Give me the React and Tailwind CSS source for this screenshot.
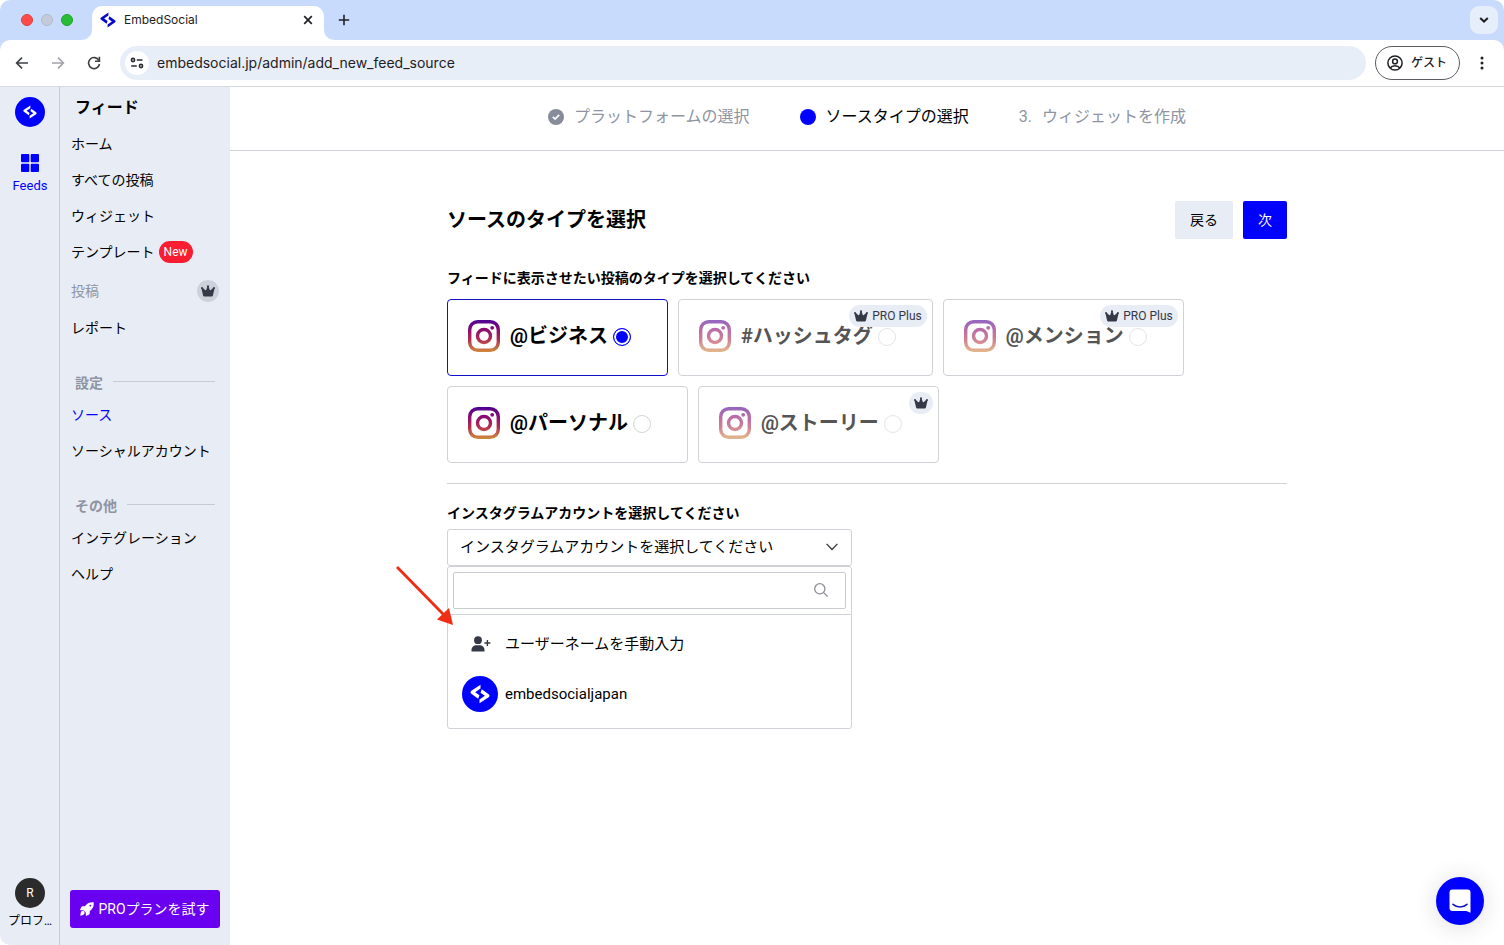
import { useState } from "react";

const SANS = "font-['Roboto','Noto_Sans_CJK_JP',sans-serif]";

function LogoMark({ className }) {
  return (
    <svg viewBox="0 0 24 24" className={className} fill="currentColor" aria-hidden="true">
      <path d="M12.600.8v4.600L6.200 9.900l5.200 3.700-1.600 4L1.600 11.600c-1.300-1-1.300-2.400 0-3.400Z" />
      <path d="M11.400 23.200v-4.600l6.400-4.500-5.200-3.700 1.600-4 8.200 6c1.300 1 1.300 2.400 0 3.400Z" />
    </svg>
  );
}

function Crown({ className }) {
  return (
    <svg viewBox="0 0 14 12" className={className} fill="currentColor" aria-hidden="true">
      <circle cx="1" cy="2.9" r=".9" />
      <circle cx="7" cy="1.2" r="1" />
      <circle cx="13" cy="2.9" r=".9" />
      <path d="M.4 3.200 1.500 2.600 4.300 5.300 5.200 5 6.400 1.400h1.200L8.800 5l.9.300 2.800-2.700 1.100.6-1.700 7.300a1.200 1.200 0 0 1-1.200.9H3.300a1.200 1.200 0 0 1-1.200-.9Z" />
    </svg>
  );
}

function InstagramIcon({ id, className }) {
  const paint = `url(#${id})`;
  return (
    <svg viewBox="0 0 32 32" className={className} fill="none" aria-hidden="true">
      <defs>
        <linearGradient id={id} gradientUnits="userSpaceOnUse" x1="16" y1="0" x2="16" y2="32">
          <stop offset="0" stopColor="#4b0096" />
          <stop offset="0.3" stopColor="#8a0c72" />
          <stop offset="0.6" stopColor="#b02a50" />
          <stop offset="1" stopColor="#d08a3c" />
        </linearGradient>
      </defs>
      <rect x="1.7" y="1.7" width="28.6" height="28.6" rx="8" stroke={paint} strokeWidth="3.4" />
      <circle cx="16" cy="16" r="6.5" stroke={paint} strokeWidth="3.4" />
      <circle cx="24.2" cy="7.8" r="1.9" fill={paint} />
    </svg>
  );
}

function BrowserChrome() {
  return (
    <header className="font-['Inter','Noto_Sans_CJK_JP',sans-serif] text-[#1f2023]">
      <div className="flex h-10 items-center rounded-t-[10px] bg-[#c9dbfc] pr-[6px] pl-[21px]">
        <div className="flex w-[61px] gap-2">
          <span className="size-3 rounded-full border border-[#e0403c] bg-[#fe4a48]" />
          <span className="size-3 rounded-full border border-[#b2bacb] bg-[#c3cad9]" />
          <span className="size-3 rounded-full border border-[#1fa32c] bg-[#29bd35]" />
        </div>
        <div className="flex items-end self-end">
          <svg viewBox="0 0 10 10" className="size-[10px] text-white" fill="currentColor" aria-hidden="true">
            <path d="M10 0v10H0A10 10 0 0 0 10 0Z" />
          </svg>
          <div className="flex h-[34px] w-[232px] items-center rounded-t-[10px] bg-white px-2 pb-[6px]">
            <LogoMark className="mr-2 size-4 text-[#0a0acb]" />
            <span className="flex-1 text-[12px]">EmbedSocial</span>
            <button type="button" aria-label="タブを閉じる" className="grid size-4 place-items-center">
              <svg viewBox="0 0 10 10" className="size-[10px]" stroke="currentColor" strokeWidth="1.7" aria-hidden="true">
                <path d="m1.2 1.2 7.6 7.6M8.8 1.2 1.2 8.8" />
              </svg>
            </button>
          </div>
          <svg viewBox="0 0 10 10" className="size-[10px] text-white" fill="currentColor" aria-hidden="true">
            <path d="M0 0v10h10A10 10 0 0 1 0 0Z" />
          </svg>
        </div>
        <button type="button" aria-label="新しいタブ" className="ml-1 grid size-3 place-items-center">
          <svg viewBox="0 0 12 12" className="size-3" stroke="currentColor" strokeWidth="1.6" aria-hidden="true">
            <path d="M6 .8v10.4M.8 6h10.4" />
          </svg>
        </button>
        <button type="button" aria-label="タブを検索" className="ml-auto grid size-7 place-items-center rounded-[9px] bg-[#e6eefb]">
          <svg viewBox="0 0 10 6" className="h-[6px] w-[10px]" fill="none" stroke="currentColor" strokeWidth="2" aria-hidden="true">
            <path d="m1.2 1 3.8 3.6L8.8 1" />
          </svg>
        </button>
      </div>
      <div className="bg-[#c9dbfc]">
        <div className="flex h-[47px] items-center rounded-t-[10px] border-b border-[#d5d8de] bg-white px-[14px]">
          <button type="button" aria-label="戻る" className="grid size-4 place-items-center">
            <svg viewBox="0 0 14 14" className="size-[14px]" fill="none" stroke="#3c3f43" strokeWidth="1.6" aria-hidden="true">
              <path d="M13 7H1.6M7 1.6 1.6 7 7 12.4" />
            </svg>
          </button>
          <button type="button" aria-label="進む" className="ml-5 grid size-4 place-items-center">
            <svg viewBox="0 0 14 14" className="size-[14px]" fill="none" stroke="#a0a3a8" strokeWidth="1.6" aria-hidden="true">
              <path d="M1 7h11.4M7 1.6 12.4 7 7 12.4" />
            </svg>
          </button>
          <button type="button" aria-label="再読み込み" className="ml-5 grid size-4 place-items-center">
            <svg viewBox="0 0 14 14" className="size-[14px]" fill="none" stroke="#3c3f43" strokeWidth="1.6" aria-hidden="true">
              <path d="M11.9 4.4A5.5 5.5 0 1 0 12.5 8" />
              <path d="M12.4.8v4.4H8" />
            </svg>
          </button>
          <div className="ml-[18px] flex h-[34px] flex-1 items-center rounded-full bg-[#e8eef8] pl-[5px]">
            <span className="grid size-6 place-items-center rounded-full bg-white">
              <svg viewBox="0 0 14 12" className="h-3 w-[14px]" fill="none" stroke="#2b2d31" strokeWidth="1.6" aria-hidden="true">
                <circle cx="3" cy="3" r="1.6" />
                <path d="M6.8 3h5.7M1.2 9h5.6" />
                <circle cx="11" cy="9" r="1.6" />
              </svg>
            </span>
            <input
              aria-label="アドレス"
              defaultValue="embedsocial.jp/admin/add_new_feed_source"
              className="ml-2 h-6 min-w-0 flex-1 bg-transparent pb-[2px] text-[14px] outline-none"
            />
          </div>
          <button type="button" className="ml-[9px] flex h-[34px] items-center rounded-full border border-[#5b5e63] pr-3 pl-[11px] text-[12px] font-medium">
            <svg viewBox="0 0 16 16" className="mr-2 size-4" fill="none" stroke="currentColor" strokeWidth="1.5" aria-hidden="true">
              <circle cx="8" cy="8" r="7.1" />
              <circle cx="8" cy="6.4" r="2.4" />
              <path d="M3.2 13c1-1.5 2.7-2.2 4.8-2.2s3.8.7 4.8 2.2" />
            </svg>
            ゲスト
          </button>
          <button type="button" aria-label="メニュー" className="ml-[14px] grid size-4 place-items-center">
            <svg viewBox="0 0 4 14" className="h-[14px] w-1" fill="currentColor" aria-hidden="true">
              <circle cx="2" cy="2" r="1.5" />
              <circle cx="2" cy="7" r="1.5" />
              <circle cx="2" cy="12" r="1.5" />
            </svg>
          </button>
        </div>
      </div>
    </header>
  );
}

function Rail() {
  return (
    <div className="flex w-[60px] shrink-0 flex-col items-center border-r border-[#c6cbd6] pt-[10px] pb-[15px] pl-px">
      <a href="#top" aria-label="EmbedSocial" className="grid size-[30px] place-items-center rounded-full bg-[#0000ff] text-white">
        <LogoMark className="size-[14px]" />
      </a>
      <a href="#feeds" className="mt-[27px] flex flex-col items-center text-[13px] leading-[18px] text-[#0000ff]">
        <svg viewBox="0 0 18 18" className="mb-[5px] size-[18px]" fill="currentColor" aria-hidden="true">
          <rect width="8.3" height="8.3" rx="1" />
          <rect x="9.7" width="8.3" height="8.3" rx="1" />
          <rect y="9.7" width="8.3" height="8.3" rx="1" />
          <rect x="9.7" y="9.7" width="8.3" height="8.3" rx="1" />
        </svg>
        Feeds
      </a>
      <a href="#profile" className="mt-auto flex flex-col items-center gap-1 text-[12px] leading-[18px]">
        <span className="grid size-[30px] place-items-center rounded-full bg-[#2b2b2b] text-white">R</span>
        <span>プロフ…</span>
      </a>
    </div>
  );
}

function NavItem({ children, active }) {
  return (
    <li>
      <a href="#nav" className={active ? "flex h-9 items-center text-[#0000ff]" : "flex h-9 items-center"}>
        {children}
      </a>
    </li>
  );
}

function NavHeading({ children }) {
  return (
    <h2 className="mt-6 flex h-[27px] items-center gap-[10px] px-[15px] font-bold text-[#8e94a2]">
      {children}
      <span className="mb-1 h-px flex-1 bg-[#c6cbd6]" />
    </h2>
  );
}

function Menu() {
  return (
    <nav className="flex w-[170px] shrink-0 flex-col pb-[17px] text-[14px]">
      <h1 className="flex h-[39px] items-center pt-[2px] pl-[15px] text-[16px] font-bold">フィード</h1>
      <ul className="pr-[11px] pl-[11px]">
        <NavItem>ホーム</NavItem>
        <NavItem>すべての投稿</NavItem>
        <NavItem>ウィジェット</NavItem>
        <NavItem>
          テンプレート
          <span className="ml-1 flex h-[22px] items-center rounded-full bg-[#f81d31] px-[5px] text-[12px] text-white">New</span>
        </NavItem>
        <li className="flex h-10 items-center justify-between pt-[2px] text-[#8e94a2]">
          投稿
          <span className="grid size-[22px] place-items-center rounded-full bg-[#ccd1dc] text-[#343847]">
            <Crown className="h-3 w-[14px]" />
          </span>
        </li>
        <NavItem>レポート</NavItem>
      </ul>
      <NavHeading>設定</NavHeading>
      <ul className="pl-[11px]">
        <NavItem active>ソース</NavItem>
        <NavItem>ソーシャルアカウント</NavItem>
      </ul>
      <NavHeading>その他</NavHeading>
      <ul className="pl-[11px]">
        <NavItem>インテグレーション</NavItem>
        <NavItem>ヘルプ</NavItem>
      </ul>
      <button type="button" className="mx-[10px] mt-auto flex h-[38px] items-center justify-center gap-1 rounded-[3px] bg-[#6a00f0] text-white">
        <svg viewBox="0 0 14 14" className="size-[14px]" fill="currentColor" aria-hidden="true">
          <path fillRule="evenodd" d="M13.7.3c.3 3.200-.5 5.500-2.200 7.200L9.700 9.200v2.400c0 .4-.2.700-.5.900l-2.600 1.300c-.4.200-.8 0-.8-.5V10.600L3.400 8.200H.7c-.5 0-.7-.4-.5-.8L1.500 4.800c.2-.3.500-.5.9-.5h2.400l1.700-1.800C8.200.8 10.500 0 13.700.3ZM10.400 4.500a.9.9 0 1 0 0-1.800.9.9 0 0 0 0 1.800Z" />
          <path d="M1.300 9.400c1-.9 2.300-.6 2.800 0s.8 1.800-.1 2.800C3.200 13 1.600 13.600.3 13.700.4 12.400.6 10.200 1.300 9.400Z" />
        </svg>
        PROプランを試す
      </button>
    </nav>
  );
}

function Steps() {
  return (
    <ol className="flex h-16 items-center justify-center gap-[50px] border-b border-[#d0d2d7] pb-[3px] text-[16px] text-[#8e94a2]">
      <li className="flex items-center gap-[10px]">
        <span className="grid size-4 place-items-center rounded-full bg-[#868c9a]">
          <svg viewBox="0 0 8 6" className="h-[6px] w-2" fill="none" stroke="white" strokeWidth="1.7" aria-hidden="true">
            <path d="m.8 2.800 2.300 2.200L7.200.8" />
          </svg>
        </span>
        プラットフォームの選択
      </li>
      <li aria-current="step" className="flex items-center gap-[10px] text-black">
        <span className="size-4 rounded-full bg-[#0000ff]" />
        ソースタイプの選択
      </li>
      <li className="flex items-center gap-[10px]">
        <span>3.</span>
        ウィジェットを作成
      </li>
    </ol>
  );
}

const SOURCE_TYPES = [
  { id: "business", label: "@ビジネス" },
  { id: "hashtag", label: "#ハッシュタグ", locked: true, plan: "PRO Plus" },
  { id: "mention", label: "@メンション", locked: true, plan: "PRO Plus" },
  { id: "personal", label: "@パーソナル" },
  { id: "story", label: "@ストーリー", locked: true },
];

function TypeCard({ type, checked, onSelect }) {
  return (
    <label
      className={
        checked
          ? "relative flex h-[77px] items-center rounded-[4px] border border-[#1010c8] pr-9 pb-1 pl-5"
          : "relative flex h-[77px] items-center rounded-[4px] border border-[#d0d2d7] pr-9 pb-1 pl-5"
      }
    >
      <InstagramIcon id={`ig-${type.id}`} className={type.locked ? "mr-[10px] size-8 opacity-60" : "mr-[10px] size-8"} />
      <span className={type.locked ? "text-[20px] font-bold text-[#555555]" : "text-[20px] font-bold text-black"}>{type.label}</span>
      <input
        type="radio"
        name="source-type"
        checked={checked}
        disabled={type.locked}
        onChange={() => onSelect(type.id)}
        className="mt-[2px] ml-[5px] size-[18px] appearance-none rounded-full border border-[#d0d2d7] bg-white checked:border-[#0000ff] checked:bg-[#0000ff] checked:shadow-[inset_0_0_0_2px_#ffffff] disabled:border-[#e2e4e8]"
      />
      {type.locked && (
        <span className="absolute top-[5px] right-[5px] flex h-[22px] items-center gap-1 rounded-full bg-[#e8ecf5] px-[5px] text-[12px] text-[#343847]">
          <Crown className="h-3 w-[14px]" />
          {type.plan}
        </span>
      )}
    </label>
  );
}

function AccountPicker() {
  return (
    <div className="relative mt-[6px] w-[405px] text-[15px]">
      <div className="relative">
        <select
          id="account"
          className="block h-[37px] w-full appearance-none rounded-[3px] border border-[#d0d2d7] bg-white pb-px pl-3 text-black outline-none"
        >
          <option>インスタグラムアカウントを選択してください</option>
        </select>
        <svg viewBox="0 0 12 8" className="pointer-events-none absolute top-[14px] right-[14px] h-2 w-3" fill="none" stroke="#33363d" strokeWidth="1.3" aria-hidden="true">
          <path d="m.6.9 5.400 5.600L11.400.9" />
        </svg>
      </div>
      <div className="rounded-[3px] border border-[#d0d2d7] bg-white pb-4">
        <div className="border-b border-[#d0d2d7] p-[5px]">
          <div className="flex h-[37px] items-center rounded-[2px] border border-[#c8cbd1] pr-[17px] pb-px pl-3">
            <input aria-label="アカウントを検索" className="min-w-0 flex-1 bg-transparent outline-none" />
            <svg viewBox="0 0 14 14" className="size-[14px]" fill="none" stroke="#8d9097" strokeWidth="1.3" aria-hidden="true">
              <circle cx="5.8" cy="5.8" r="5.1" />
              <path d="m9.600 9.600 4 4" />
            </svg>
          </div>
        </div>
        <button type="button" className="mt-[10px] flex h-[38px] w-full items-center gap-[7px] pl-[14px] text-left">
          <span className="grid w-9 place-items-center pl-[2px]">
            <svg viewBox="0 0 20 16" className="h-4 w-5" fill="#343847" aria-hidden="true">
              <circle cx="7" cy="4.2" r="3.9" />
              <path d="M.5 15.500v-1.500C.5 11 2.800 9.200 5.400 9.200h3.200c2.600 0 4.900 1.800 4.900 4.800v1.500Z" />
              <path d="M15.700 4h1.400v2.300h2.300v1.400h-2.300V10h-1.400V7.700h-2.300V6.300h2.300Z" />
            </svg>
          </span>
          ユーザーネームを手動入力
        </button>
        <button type="button" className="mt-[13px] flex h-9 w-full items-center gap-[7px] pl-[14px] text-left">
          <span className="grid size-9 place-items-center rounded-full bg-[#0000ff] text-white">
            <LogoMark className="size-5" />
          </span>
          embedsocialjapan
        </button>
      </div>
      <svg viewBox="0 0 60 62" className="absolute top-9 -left-[51px] h-[62px] w-[60px]" aria-hidden="true">
        <path d="M1 2 48 50" stroke="#ee2c16" strokeWidth="2.8" />
        <path d="M57 60 41 54.500 53 43Z" fill="#f22d16" />
      </svg>
    </div>
  );
}

export default function App() {
  const [selected, setSelected] = useState("business");
  return (
    <div className={`flex min-h-screen flex-col overflow-hidden bg-white text-black ${SANS}`}>
      <BrowserChrome />
      <div className="flex flex-1">
        <aside className="flex rounded-bl-[10px] bg-[#e8ecf5]">
          <Rail />
          <Menu />
        </aside>
        <main className="min-w-0 flex-1">
          <Steps />
          <section className="mx-auto max-w-[840px] pt-[50px]">
            <div className="flex h-[38px] items-center gap-[10px] text-[14px]">
              <h2 className="flex-1 text-[20px] font-bold">ソースのタイプを選択</h2>
              <button type="button" className="h-[38px] rounded-[2px] bg-[#e8ecf5] px-[15px]">戻る</button>
              <button type="button" className="h-[38px] rounded-[2px] bg-[#0000ff] px-[15px] text-white">次</button>
            </div>
            <fieldset className="border-b border-[#d0d2d7] pb-5">
              <legend className="pt-[29px] pb-[11px] text-[14px] leading-5 font-bold">
                フィードに表示させたい投稿のタイプを選択してください
              </legend>
              <div className="flex flex-wrap gap-[10px]">
                {SOURCE_TYPES.map((type) => (
                  <TypeCard key={type.id} type={type} checked={selected === type.id} onSelect={setSelected} />
                ))}
              </div>
            </fieldset>
            <label htmlFor="account" className="mt-[19px] block text-[14px] leading-5 font-bold">
              インスタグラムアカウントを選択してください
            </label>
            <AccountPicker />
          </section>
        </main>
      </div>
      <button
        type="button"
        aria-label="チャットを開く"
        className="fixed right-5 bottom-5 grid size-12 place-items-center rounded-full bg-[#0000ff] shadow-[0_2px_24px_rgba(0,0,0,0.14)]"
      >
        <svg viewBox="0 0 22 24" className="h-6 w-[22px]" aria-hidden="true">
          <path d="M3.5.5h15a3 3 0 0 1 3 3V23.800L17.400 22H3.500a3 3 0 0 1-3-3V3.500a3 3 0 0 1 3-3Z" fill="white" />
          <path d="M4 15.400c3.900 3.400 10.100 3.400 14 0" fill="none" stroke="#1010c0" strokeWidth="1.6" strokeLinecap="round" />
        </svg>
      </button>
    </div>
  );
}
